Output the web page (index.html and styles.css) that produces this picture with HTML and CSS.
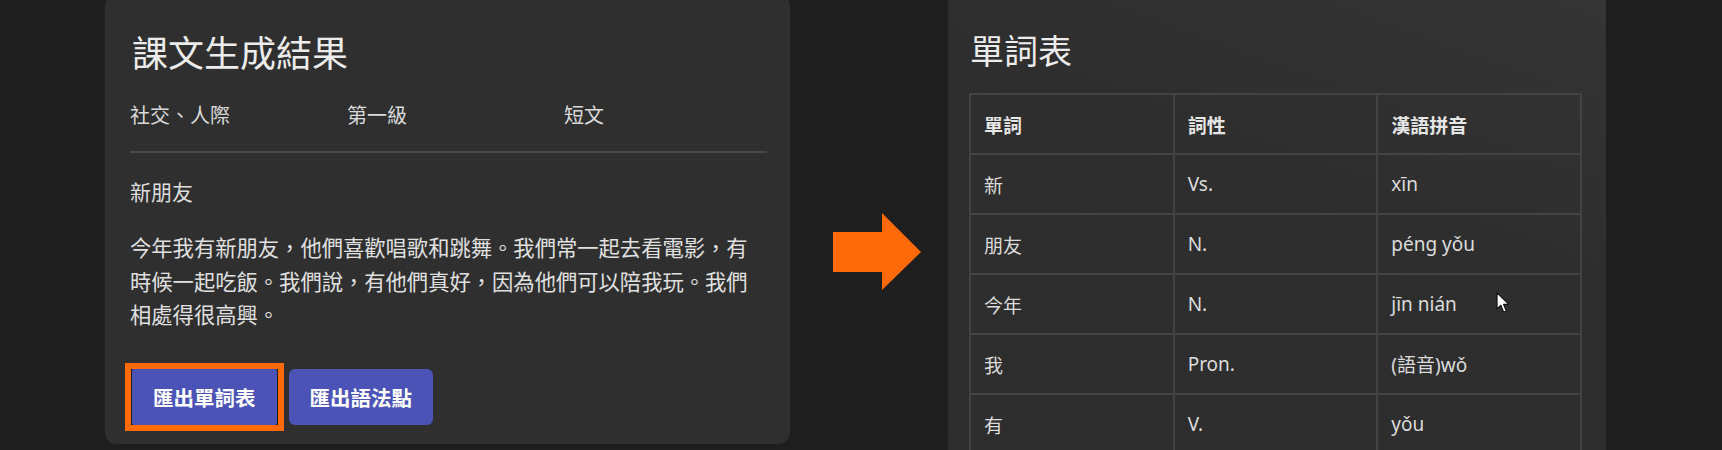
FILE: index.html
```html
<!DOCTYPE html>
<html lang="zh-TW">
<head>
<meta charset="utf-8">
<title>課文生成結果 → 單詞表</title>
<link rel="stylesheet" href="styles.css">
</head>
<body>
<div class="stage">
  <section class="card result">
    <h2 class="card-title">課文生成結果</h2>
    <div class="meta">
      <span>社交、人際</span>
      <span>第一級</span>
      <span>短文</span>
    </div>
    <hr class="divider">
    <p class="lesson-title">新朋友</p>
    <p class="lesson-body">今年我有新朋友，他們喜歡唱歌和跳舞。我們常一起去看電影，有時候一起吃飯。我們說，有他們真好，因為他們可以陪我玩。我們相處得很高興。</p>
    <div class="actions">
      <span class="highlight"><button class="btn">匯出單詞表</button></span>
      <button class="btn">匯出語法點</button>
    </div>
  </section>

  <div class="arrow-zone">
    <svg class="arrow" width="88" height="77" viewBox="0 0 88 77" aria-hidden="true">
      <polygon points="0,19 49,19 49,0 88,39 49,77 49,59 0,59" fill="#ff6a08"/>
    </svg>
  </div>

  <section class="card vocab">
    <h2 class="card-title vocab-title">單詞表</h2>
    <table class="vocab-table">
      <thead>
        <tr><th>單詞</th><th>詞性</th><th>漢語拼音</th></tr>
      </thead>
      <tbody>
        <tr><td>新</td><td>Vs.</td><td>xīn</td></tr>
        <tr><td>朋友</td><td>N.</td><td>péng yǒu</td></tr>
        <tr><td>今年</td><td>N.</td><td>jīn nián</td></tr>
        <tr><td>我</td><td>Pron.</td><td>(語音)wǒ</td></tr>
        <tr><td>有</td><td>V.</td><td>yǒu</td></tr>
      </tbody>
    </table>
  </section>

  <svg class="cursor" width="15" height="24" viewBox="0 0 14 21" aria-hidden="true">
    <path d="M1 1 L1 16 L4.6 12.6 L7.2 19 L9.6 18 L7 11.8 L12 11.8 Z" fill="#ffffff" stroke="#111" stroke-width="1" stroke-linejoin="round"/>
  </svg>
</div>
</body>
</html>
```

FILE: styles.css
```css
* { box-sizing: border-box; }

html, body {
  margin: 0;
  padding: 0;
  background: #1e1e1e;
}

body {
  font-family: "Noto Sans", "Noto Sans CJK TC", sans-serif;
  color: #e2e2e2;
}

.stage {
  position: relative;
  width: 1722px;
  height: 450px;
  overflow: hidden;
  display: flex;
  align-items: flex-start;
  padding-left: 105px;
}

.card {
  background: #2f2f2f;
  border-radius: 12px;
}

.result {
  width: 685px;
  margin-top: -6px;
  padding: 35px 23px 13px 25px;
  font-family: "Noto Sans CJK TC", sans-serif;
}

.card-title {
  margin: 0;
  font-size: 36px;
  line-height: 44px;
  font-weight: 400;
  color: #ececec;
  padding-left: 2px;
}

.meta {
  margin-top: 27px;
  display: grid;
  grid-template-columns: 217px 217px 1fr;
  font-size: 20px;
  line-height: 30px;
  color: #dadada;
}

.divider {
  margin: 21px 0 0;
  border: 0;
  height: 2px;
  background: #4a4a4a;
}

.lesson-title {
  margin: 22px 0 0;
  font-size: 21px;
  line-height: 33px;
  color: #dedede;
}

.lesson-body {
  margin: 22px 0 0;
  font-size: 21.3px;
  line-height: 33.5px;
  color: #e0e0e0;
}

.actions {
  margin-top: 32px;
  display: flex;
  align-items: center;
  gap: 5px;
  margin-left: -5px;
}

.highlight {
  display: inline-flex;
  border: 6px solid #ff6a08;
  background: #1d1d1d;
  padding: 0 1px;
}

.btn {
  font-family: "Noto Sans CJK TC", sans-serif;
  font-size: 20.5px;
  font-weight: 700;
  color: #ffffff;
  background: #4b54b6;
  border: 0;
  border-radius: 6px;
  height: 56px;
  padding: 0 21px;
  cursor: pointer;
}

.highlight .btn {
  border-radius: 2px;
}

.arrow-zone {
  width: 158px;
  flex: none;
  padding-top: 213px;
  padding-left: 43px;
}

.arrow {
  display: block;
}

.vocab {
  width: 658px;
  flex: none;
  margin-top: -20px;
  height: 520px;
  padding: 49px 24px 0 21px;
  border-radius: 0;
  background: linear-gradient(200deg, #353535 0%, #2e2e2e 40%, #2d2d2d 100%);
}

.vocab-title {
  font-size: 34px;
  line-height: 42px;
  padding-left: 1px;
  font-family: "Noto Sans CJK TC", sans-serif;
}

.vocab-table {
  margin-top: 22px;
  width: 613px;
  border-collapse: collapse;
  table-layout: fixed;
  font-family: "Noto Sans", "Noto Sans CJK TC", sans-serif;
}

.vocab-table th,
.vocab-table td {
  border: 2px solid #434343;
  height: 60px;
  padding: 0 0 0 13px;
  text-align: left;
  vertical-align: middle;
  font-size: 19px;
  color: #dcdcdc;
}

.vocab-table th {
  font-weight: 700;
  color: #e6e6e6;
  font-family: "Noto Sans CJK TC", sans-serif;
}

.vocab-table td:first-child {
  font-family: "Noto Sans CJK TC", sans-serif;
}

.cursor {
  position: absolute;
  left: 1496px;
  top: 291px;
}
```
